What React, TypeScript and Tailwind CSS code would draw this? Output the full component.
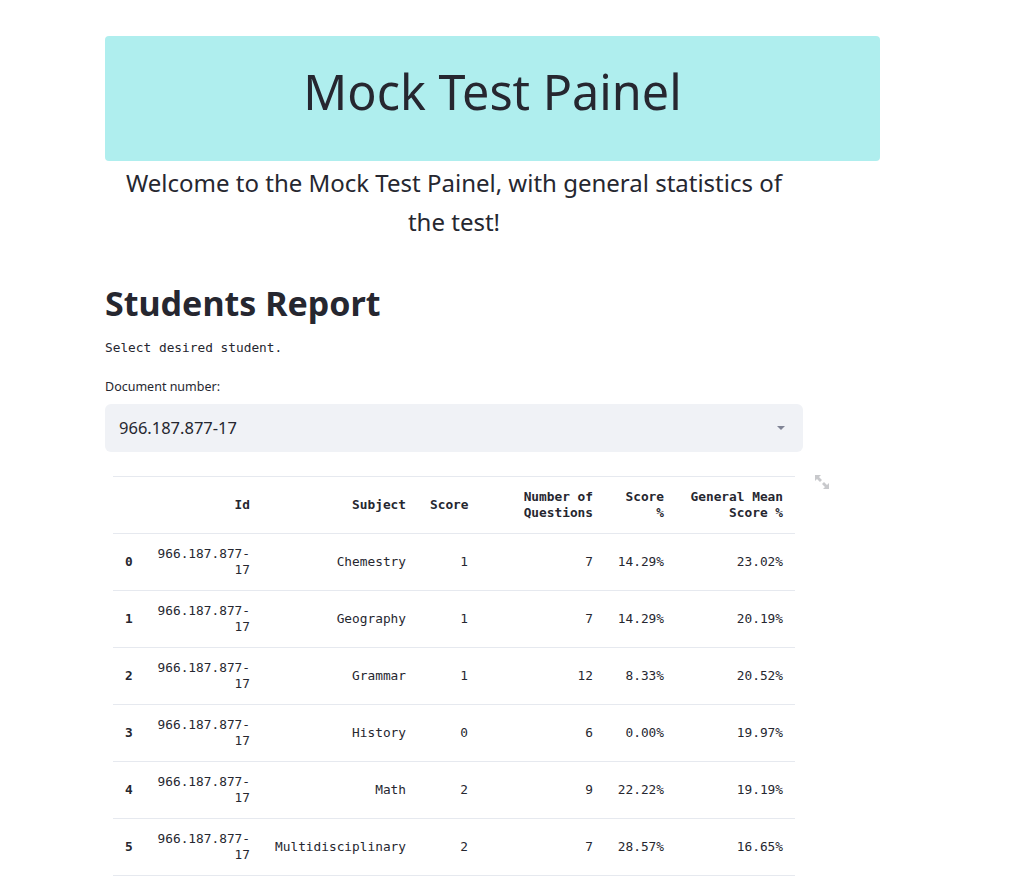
import React from 'react';

const rows = [
  { idx: 0, subject: 'Chemestry', score: 1, questions: 7, pct: '14.29%', mean: '23.02%' },
  { idx: 1, subject: 'Geography', score: 1, questions: 7, pct: '14.29%', mean: '20.19%' },
  { idx: 2, subject: 'Grammar', score: 1, questions: 12, pct: '8.33%', mean: '20.52%' },
  { idx: 3, subject: 'History', score: 0, questions: 6, pct: '0.00%', mean: '19.97%' },
  { idx: 4, subject: 'Math', score: 2, questions: 9, pct: '22.22%', mean: '19.19%' },
  { idx: 5, subject: 'Multidisciplinary', score: 2, questions: 7, pct: '28.57%', mean: '16.65%' },
];

const sans = "font-['Noto_Sans',sans-serif]";
const mono = "font-['DejaVu_Sans_Mono',monospace]";

const ExpandIcon: React.FC = () => (
  <svg width="16" height="16" viewBox="0 0 16 16" fill="#c8c9cc">
    <path d="M1 1h6L5 3l3 3-2 2-3-3-2 2z" />
    <path d="M15 15H9l2-2-3-3 2-2 3 3 2-2z" />
  </svg>
);

const App: React.FC = () => {
  return (
    <div className={`min-h-screen bg-white text-[#262730] ${sans}`}>
      <div className="ml-[105px] w-[698px] pt-[36px]">
        <div className="w-[775px] h-[125px] rounded-[4px] bg-[#afeeee] flex justify-center pt-[26px]">
          <h1 className="text-[48.5px] leading-[58px] font-normal text-[#262730]">Mock Test Painel</h1>
        </div>

        <p className="text-center text-[24px] leading-[39px] mt-[2px] px-[20px]">
          Welcome to the Mock Test Painel, with general statistics of the test!
        </p>

        <h2 className="mt-[40px] text-[34px] leading-[44px] font-bold">Students Report</h2>

        <p className={`${mono} text-[12.8px] mt-[14px] leading-[18px]`}>Select desired student.</p>

        <label className="block text-[12.5px] mt-[21px] leading-[18px]">Document number:</label>
        <div className="mt-[8px] h-[48px] rounded-[6px] bg-[#f0f2f6] flex items-center justify-between pl-[14px] pr-[17px]">
          <span className="text-[16.5px]">966.187.877-17</span>
          <svg width="10" height="6" viewBox="0 0 10 6">
            <path d="M1 1h8L5 5z" fill="#808495" />
          </svg>
        </div>

        <div className="relative mt-[24px] ml-[8px] w-[682px]">
          <div className="absolute -right-[35px] top-[-2px]">
            <ExpandIcon />
          </div>
          <table className={`${mono} text-[12.8px] leading-[16px] table-fixed w-[682px] border-collapse`}>
            <colgroup>
              <col className="w-[32px]" />
              <col className="w-[117px]" />
              <col className="w-[156px]" />
              <col className="w-[62px]" />
              <col className="w-[125px]" />
              <col className="w-[71px]" />
              <col className="w-[119px]" />
            </colgroup>
            <thead>
              <tr className="h-[57px] border-y border-[#e6e9ef]">
                <th className="px-[12px]"></th>
                <th className="px-[12px] text-right font-bold">Id</th>
                <th className="px-[12px] text-right font-bold">Subject</th>
                <th className="px-[12px] text-right font-bold">Score</th>
                <th className="px-[12px] text-right font-bold">Number of Questions</th>
                <th className="px-[12px] text-right font-bold">Score %</th>
                <th className="px-[12px] text-right font-bold">General Mean Score %</th>
              </tr>
            </thead>
            <tbody>
              {rows.map(r => (
                <tr key={r.idx} className="h-[57px] border-b border-[#e6e9ef]">
                  <td className="px-[12px] text-left font-bold">{r.idx}</td>
                  <td className="px-[12px] text-right align-top pt-[12px]">966.187.877-17</td>
                  <td className="px-[12px] text-right">{r.subject}</td>
                  <td className="px-[12px] text-right">{r.score}</td>
                  <td className="px-[12px] text-right">{r.questions}</td>
                  <td className="px-[12px] text-right">{r.pct}</td>
                  <td className="px-[12px] text-right">{r.mean}</td>
                </tr>
              ))}
            </tbody>
          </table>
        </div>
      </div>
    </div>
  );
};

export default App;
